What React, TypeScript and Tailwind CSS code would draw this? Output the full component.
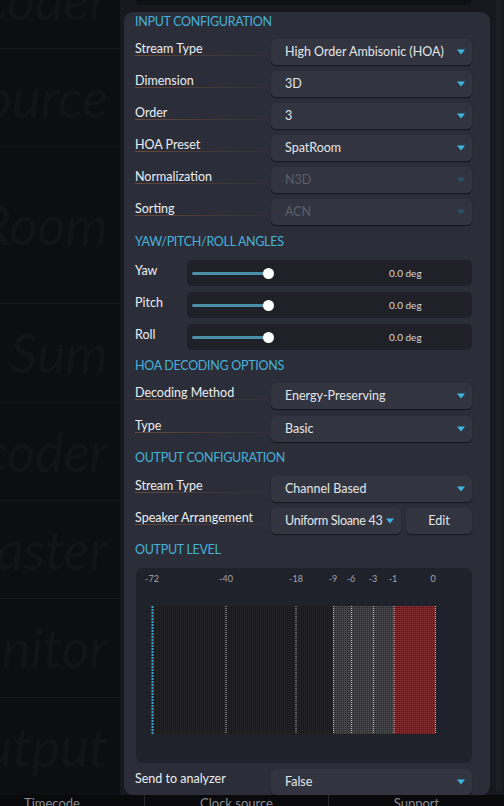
import type { ReactNode } from "react";

const FONT = "font-['Lato','Open_Sans',sans-serif]";

const BACKDROP_ROWS = [
  { word: "Decoder", h: "h-[98px] -mt-[49px]" },
  { word: "Source", h: "h-[98px]" },
  { word: "Room", h: "h-[157px]" },
  { word: "Sum", h: "h-[99px]" },
  { word: "Encoder", h: "h-[98px]" },
  { word: "Master", h: "h-[98px]" },
  { word: "Monitor", h: "h-[99px]" },
  { word: "Output", h: "h-[99px]" },
];

function Arrow({ disabled = false }: { disabled?: boolean }) {
  return (
    <svg width="8" height="6" viewBox="0 0 8 6" className="shrink-0">
      <path d="M0 0.5 H8 L4 5.5 Z" fill={disabled ? "#2b5566" : "#3db5e0"} />
    </svg>
  );
}

function Dropdown({
  value,
  disabled = false,
  className = "",
  textClass = "",
}: {
  value: string;
  disabled?: boolean;
  className?: string;
  textClass?: string;
}) {
  return (
    <div
      className={`flex h-[26px] items-center rounded-[5px] bg-[#32353f] pl-[14px] pr-[7px] shadow-[0_1px_1px_rgba(0,0,0,0.55)] ${className}`}
    >
      <span className={`flex-1 whitespace-nowrap text-[12.5px] ${disabled ? "text-[#5b5f6a]" : "text-[#e4e5e8]"} ${textClass}`}>
        {value}
      </span>
      <Arrow disabled={disabled} />
    </div>
  );
}

function Heading({ children, className = "" }: { children: ReactNode; className?: string }) {
  return (
    <h2 className={`h-[18px] text-[12.5px] leading-[18px] tracking-[-0.3px] text-[#47b1d8] ${className}`}>{children}</h2>
  );
}

function Field({ label, children, underline = true }: { label: string; children: ReactNode; underline?: boolean }) {
  return (
    <div className="flex items-start">
      <div className="flex w-[136px] shrink-0 flex-col pt-[3px]">
        <span className="text-[12.5px] leading-[13px] text-[#eceef1]">{label}</span>
        {underline && <div className="h-px w-[132px] bg-linear-to-r from-[#6a4a3a] via-[#4a3a36] to-[#343038]" />}
      </div>
      <div className="flex flex-1 gap-[5px]">{children}</div>
    </div>
  );
}

function SliderRow({ label }: { label: string }) {
  return (
    <div className="flex items-center">
      <span className="w-[52px] shrink-0 -mt-[3px] text-[12.5px] text-[#eceef1]">{label}</span>
      <div className="flex h-[26px] flex-1 items-center rounded-[5px] bg-[#1f2028] pl-[5px]">
        <div className="h-[3px] w-[76px] rounded-full bg-[#4a8fa8]" />
        <div className="-ml-[5px] h-[11px] w-[11px] rounded-full bg-white" />
        <span className="ml-[115px] text-[10px] text-[#d8d9dc]">0.0 deg</span>
      </div>
    </div>
  );
}

const TICKS = [
  { label: "-72", x: 16 },
  { label: "-40", x: 90 },
  { label: "-18", x: 160 },
  { label: "-9", x: 197 },
  { label: "-6", x: 215 },
  { label: "-3", x: 237 },
  { label: "-1", x: 257 },
  { label: "0", x: 297 },
];

function LevelMeter() {
  const lines = [90, 160, 197.5, 215.5, 237.5, 258, 299.5];
  return (
    <div className="ml-px h-[195px] rounded-[6px] bg-[#20222b]">
      <svg width="336" height="195" viewBox="0 0 336 195">
        <defs>
          <pattern id="dark" width="2" height="1" patternUnits="userSpaceOnUse">
            <rect width="2" height="1" fill="#19191b" />
            <rect width="1" height="1" fill="#232325" />
          </pattern>
          <pattern id="gray" width="2" height="2" patternUnits="userSpaceOnUse">
            <rect width="2" height="2" fill="#444447" />
            <rect x="1" y="1" width="1" height="1" fill="#262628" />
          </pattern>
          <pattern id="red" width="2" height="2" patternUnits="userSpaceOnUse">
            <rect width="2" height="2" fill="#7e2b2d" />
            <rect x="1" y="1" width="1" height="1" fill="#3a1719" />
          </pattern>
        </defs>
        {TICKS.map((t) => (
          <text key={t.label} x={t.x} y={14} fontSize="9" fill="#a3a5ab" textAnchor="middle" fontFamily="Lato, sans-serif">
            {t.label}
          </text>
        ))}
        <rect x="18" y="38" width="179" height="128" fill="url(#dark)" />
        <rect x="197" y="38" width="61" height="128" fill="url(#gray)" />
        <rect x="258" y="38" width="41" height="128" fill="url(#red)" />
        <line x1="16.5" y1="38" x2="16.5" y2="166" stroke="#3fa7cc" strokeWidth="2" strokeDasharray="2 1" />
        {lines.map((x) => (
          <line key={x} x1={x} y1="38" x2={x} y2="166" stroke="#c4c4c6" strokeWidth="1" strokeDasharray="1 1" />
        ))}
      </svg>
    </div>
  );
}

export default function App() {
  return (
    <div className={`flex h-[806px] w-[504px] flex-col overflow-hidden bg-[#0d0e12] ${FONT}`}>
      <div className="flex h-[795px] shrink-0">
        {/* backdrop list */}
        <div className="flex w-[120px] shrink-0 flex-col overflow-hidden">
          {BACKDROP_ROWS.map((r) => (
            <div
              key={r.word}
              className={`flex shrink-0 items-center justify-end overflow-hidden border-b border-[#17181c] pr-[12px] ${r.h}`}
            >
              <span className="whitespace-nowrap text-[54px] italic leading-none text-[#131418]">{r.word}</span>
            </div>
          ))}
        </div>

        <div className="flex flex-1 bg-[#17181d]">
          <div className="flex flex-1 flex-col pl-[4px]">
            <div className="h-[12px] shrink-0 pl-[12px]">
              <div className="h-[5px] w-[335px] rounded-b-[5px] bg-[#0f1014]" />
            </div>

            <div className="flex flex-1 flex-col rounded-[9px] bg-[#2b2e39] pl-[11px] pr-[18px] pt-px">
              <Heading>INPUT CONFIGURATION</Heading>
              <div className="mt-[8px] flex flex-col gap-[6px]">
                <Field label="Stream Type"><Dropdown className="flex-1" value="High Order Ambisonic (HOA)" /></Field>
                <Field label="Dimension"><Dropdown className="flex-1" value="3D" /></Field>
                <Field label="Order"><Dropdown className="flex-1" value="3" /></Field>
                <Field label="HOA Preset"><Dropdown className="flex-1" value="SpatRoom" /></Field>
                <Field label="Normalization"><Dropdown className="flex-1" value="N3D" disabled /></Field>
                <Field label="Sorting"><Dropdown className="flex-1" value="ACN" disabled /></Field>
              </div>

              <Heading className="mt-[8px]">YAW/PITCH/ROLL ANGLES</Heading>
              <div className="mt-[9px] flex flex-col gap-[6px]">
                <SliderRow label="Yaw" />
                <SliderRow label="Pitch" />
                <SliderRow label="Roll" />
              </div>

              <Heading className="mt-[7px]">HOA DECODING OPTIONS</Heading>
              <div className="mt-[8px] flex flex-col gap-[7px]">
                <Field label="Decoding Method"><Dropdown className="flex-1" value="Energy-Preserving" /></Field>
                <Field label="Type"><Dropdown className="flex-1" value="Basic" /></Field>
              </div>

              <Heading className="mt-[7px]">OUTPUT CONFIGURATION</Heading>
              <div className="mt-[9px] flex flex-col gap-[6px]">
                <Field label="Stream Type"><Dropdown className="flex-1" value="Channel Based" /></Field>
                <Field label="Speaker Arrangement">
                  <Dropdown className="w-[130px]" textClass="tracking-[-0.3px]" value="Uniform Sloane 43" />
                  <button className="flex h-[26px] flex-1 items-center justify-center rounded-[5px] bg-[#32353f] text-[12.5px] text-[#e4e5e8] shadow-[0_1px_1px_rgba(0,0,0,0.55)]">
                    Edit
                  </button>
                </Field>
              </div>

              <Heading className="mt-[7px]">OUTPUT LEVEL</Heading>
              <div className="mt-[9px]">
                <LevelMeter />
              </div>

              <div className="mt-[6px]">
                <Field label="Send to analyzer" underline={false}>
                  <Dropdown className="flex-1" value="False" />
                </Field>
              </div>
            </div>
          </div>

          <div className="flex w-[14px] shrink-0 pl-[6px] pr-[2px]">
            <div className="mb-[3px] flex-1 rounded-b-[2px] bg-[#1d1e23]" />
          </div>
        </div>
      </div>

      <div className="flex h-[11px] shrink-0 bg-[#0a0a0c] text-[13px] leading-[16px] text-[#8a8c92]">
        <div className="w-[145px] border-r border-[#26272c] pr-[40px] text-center">Timecode</div>
        <div className="w-[184px] border-r border-[#26272c] text-center">Clock source</div>
        <div className="flex-1 text-center">Support</div>
      </div>
    </div>
  );
}
